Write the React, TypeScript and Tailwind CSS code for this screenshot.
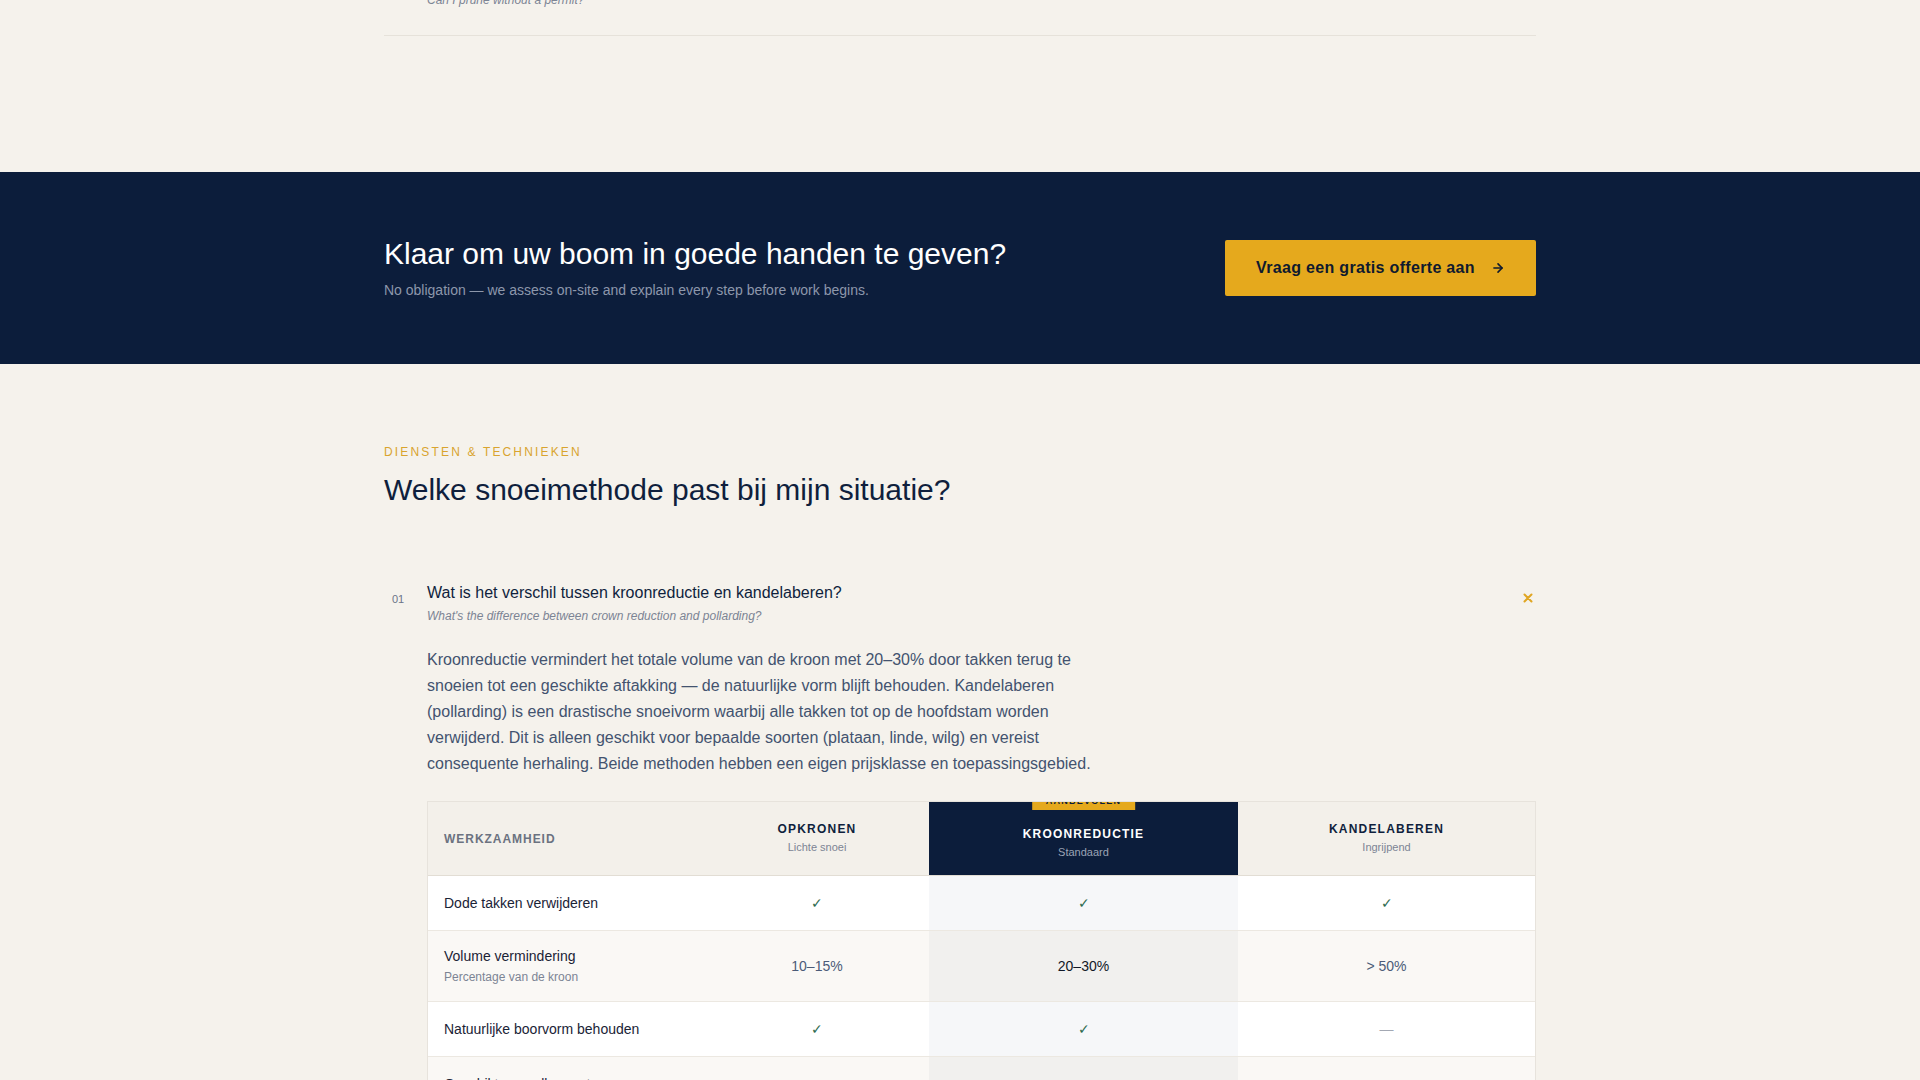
import React from 'react';
import { ArrowRight } from 'lucide-react';

type Cell = string | 'check' | 'dash';

interface Row {
  label: string;
  note?: string;
  values: [Cell, Cell, Cell];
}

const rows: Row[] = [
  { label: 'Dode takken verwijderen', values: ['check', 'check', 'check'] },
  { label: 'Volume vermindering', note: 'Percentage van de kroon', values: ['10–15%', '20–30%', '> 50%'] },
  { label: 'Natuurlijke boorvorm behouden', values: ['check', 'check', 'dash'] },
  { label: 'Geschikt voor alle soorten', values: ['check', 'check', 'dash'] },
  { label: 'Jaarlijkse herhaling nodig', values: ['dash', 'dash', 'check'] },
];

const CellValue: React.FC<{ value: Cell; featured?: boolean }> = ({ value, featured }) => {
  if (value === 'check') return <span className="text-sm text-[#2f6b4f]">✓</span>;
  if (value === 'dash') return <span className="text-sm text-[#a3a8b3]">—</span>;
  return <span className={`text-sm ${featured ? 'text-[#111827]' : 'text-[#4b5b78]'}`}>{value}</span>;
};

const CloseIcon = () => (
  <svg width="12" height="12" viewBox="0 0 12 12" fill="none" stroke="#e0a623" strokeWidth="2" strokeLinecap="round">
    <path d="M2.5 2.5l7 7M9.5 2.5l-7 7" />
  </svg>
);

const ComparisonTable = () => (
  <div className="mt-6 overflow-hidden border border-[#e7e3dc] bg-white">
    <div className="grid grid-cols-[277px_224px_309px_1fr] bg-[#f3f0ea] border-b border-[#e2ddd4] h-[74px]">
      <div className="flex items-center px-4">
        <span className="text-xs font-semibold tracking-[0.08em] text-[#6b7280]">WERKZAAMHEID</span>
      </div>
      <div className="flex flex-col items-center justify-center pb-[2px]">
        <span className="text-xs leading-4 font-bold tracking-[0.1em] text-[#0f1f3d]">OPKRONEN</span>
        <span className="mt-[3px] text-[11px] leading-[14px] text-[#7c8494]">Lichte snoei</span>
      </div>
      <div className="relative flex flex-col items-center justify-center bg-[#0c1d3b] pt-[8px]">
        <span className="absolute -top-[10px] left-1/2 -translate-x-1/2 h-[18px] px-[14px] bg-[#e5a91d] text-[9px] leading-[18px] font-bold tracking-[0.14em] text-[#0c1d3b]">
          AANBEVOLEN
        </span>
        <span className="text-xs leading-4 font-bold tracking-[0.1em] text-white">KROONREDUCTIE</span>
        <span className="mt-[3px] text-[11px] leading-[14px] text-[#9aa3b5]">Standaard</span>
      </div>
      <div className="flex flex-col items-center justify-center pb-[2px]">
        <span className="text-xs leading-4 font-bold tracking-[0.1em] text-[#0f1f3d]">KANDELABEREN</span>
        <span className="mt-[3px] text-[11px] leading-[14px] text-[#7c8494]">Ingrijpend</span>
      </div>
    </div>

    {rows.map((row, i) => {
      const striped = i % 2 === 1;
      return (
        <div
          key={row.label}
          className={`grid grid-cols-[277px_224px_309px_1fr] border-b border-[#ece8e1] ${striped ? 'bg-[#faf8f5]' : 'bg-white'}`}
        >
          <div className={row.note ? 'px-4 pt-[15px] pb-4' : 'px-4 py-[17px]'}>
            <div className="text-sm leading-5 text-[#1a2336]">{row.label}</div>
            {row.note && <div className="mt-[3px] text-xs leading-4 text-[#7c8494]">{row.note}</div>}
          </div>
          <div className="flex items-center justify-center">
            <CellValue value={row.values[0]} />
          </div>
          <div className={`flex items-center justify-center ${striped ? 'bg-[#f1f0ee]' : 'bg-[#f6f7f9]'}`}>
            <CellValue value={row.values[1]} featured />
          </div>
          <div className="flex items-center justify-center">
            <CellValue value={row.values[2]} />
          </div>
        </div>
      );
    })}
  </div>
);

export default function App() {
  return (
    <div className="min-h-screen bg-[#f5f2ec] font-['Liberation_Sans',Arial,sans-serif]">
      {/* tail of the previous FAQ list */}
      <section className="pb-[136px]">
        <div className="max-w-[1152px] mx-auto">
          <div className="border-b border-[#e6e2da] pl-[43px] pb-[27px]">
            <p className="-mt-2 text-xs leading-4 italic text-[#7c8494]">Can I prune without a permit?</p>
          </div>
        </div>
      </section>

      {/* CTA band */}
      <section className="bg-[#0c1d3b] py-16">
        <div className="max-w-[1152px] mx-auto flex items-center justify-between">
          <div>
            <h2 className="text-[30px] leading-9 text-white">Klaar om uw boom in goede handen te geven?</h2>
            <p className="mt-2 text-sm leading-5 text-[#8d97ab]">
              No obligation — we assess on-site and explain every step before work begins.
            </p>
          </div>
          <button className="flex items-center gap-4 h-14 w-[311px] justify-center rounded-[2px] bg-[#e5a91d] text-[#0f1a2e] text-[16px] tracking-[0.02em] font-bold">
            <span>Vraag een gratis offerte aan</span>
            <ArrowRight size={14} strokeWidth={2.75} />
          </button>
        </div>
      </section>

      {/* Services & techniques */}
      <section className="pt-20 pb-24">
        <div className="max-w-[1152px] mx-auto">
          <div className="text-xs leading-4 tracking-[0.18em] text-[#d9a42e]">DIENSTEN &amp; TECHNIEKEN</div>
          <h2 className="mt-3 text-[30px] leading-9 text-[#0f1f3d]">Welke snoeimethode past bij mijn situatie?</h2>

          <div className="mt-[73px] pl-2">
            <div className="flex items-start">
              <span className="w-[35px] pt-[10px] text-[11px] leading-4 text-[#6b7488]">01</span>
              <div className="flex-1">
                <div className="text-base leading-6 text-[#0f1f3d]">Wat is het verschil tussen kroonreductie en kandelaberen?</div>
                <div className="mt-[3px] text-xs leading-4 italic text-[#7c8494]">
                  What&apos;s the difference between crown reduction and pollarding?
                </div>
              </div>
              <span className="pt-[11px] mr-[2px]">
                <CloseIcon />
              </span>
            </div>

            <div className="pl-[35px]">
              <p className="mt-[23px] max-w-[672px] text-base leading-[26px] text-[#43536f]">
                Kroonreductie vermindert het totale volume van de kroon met 20–30% door takken terug te snoeien tot een
                geschikte aftakking — de natuurlijke vorm blijft behouden. Kandelaberen (pollarding) is een drastische
                snoeivorm waarbij alle takken tot op de hoofdstam worden verwijderd. Dit is alleen geschikt voor bepaalde
                soorten (plataan, linde, wilg) en vereist consequente herhaling. Beide methoden hebben een eigen
                prijsklasse en toepassingsgebied.
              </p>
              <ComparisonTable />
            </div>
          </div>
        </div>
      </section>
    </div>
  );
}
